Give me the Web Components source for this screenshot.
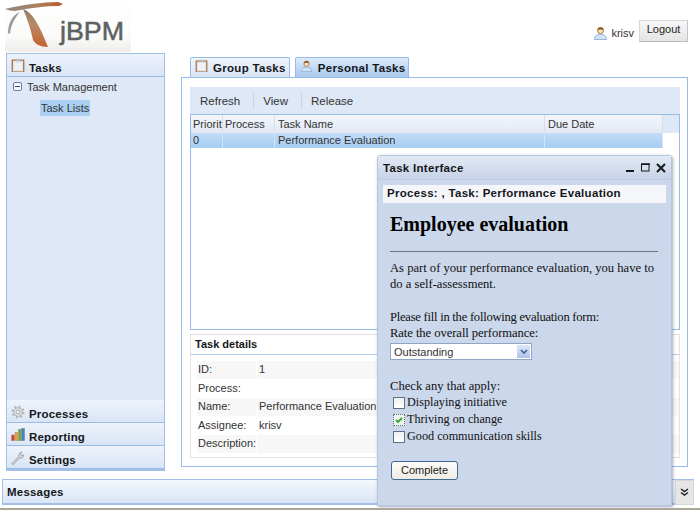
<!DOCTYPE html>
<html>
<head>
<meta charset="utf-8">
<title>jBPM</title>
<style>
html,body{margin:0;padding:0;background:#fff;overflow:hidden;}
body{font-family:"Liberation Sans",Arial,sans-serif;font-size:11px;color:#333;}
</style>
</head>
<body>
<jbpm-app></jbpm-app>
<script>
const ICONS = {
   clipboard: `<svg viewBox="0 0 16 17"><rect x="1.500" y="2.500" width="13" height="13.500" fill="#fff" stroke="#a9794f" stroke-width="1.600"/><rect x="3.200" y="4.500" width="9.600" height="10" fill="#eef1f5" stroke="#c9d0da" stroke-width=".6"/><rect x="5" y="1" width="6" height="3" fill="#b9bdc2"/></svg>`,
   user: `<svg viewBox="0 0 16 17"><path d="M1.500 15.500c0-4 2.800-5.500 6.500-5.500s6.500 1.500 6.500 5.500z" fill="#cfe2f6" stroke="#8fb2dc"/><circle cx="8" cy="6" r="3.200" fill="#f7e0c0" stroke="#a5763c"/><path d="M4.800 5.500a3.200 3.200 0 0 1 6.400 0c-1.500-1-4.900-1-6.400 0z" fill="#8c5a24"/></svg>`,
   gear: `<svg viewBox="0 0 16 16"><circle cx="8" cy="8" r="5" fill="#dcdee0" stroke="#a9acaf"/><circle cx="8" cy="8" r="6.300" fill="none" stroke="#b4b7ba" stroke-width="2.400" stroke-dasharray="2.200 2.750"/><circle cx="8" cy="8" r="2.200" fill="#f4f5f6" stroke="#a2a5a8"/></svg>`,
   chart: `<svg viewBox="0 0 16 15"><rect x=".5" y="8" width="3.500" height="6.500" fill="#d8452c" stroke="#9c8f86" stroke-width=".5"/><rect x="4.500" y="5" width="3.500" height="9.500" fill="#e8a03c" stroke="#9c8f86" stroke-width=".5"/><rect x="8.500" y="1.500" width="3.200" height="13" fill="#6fae3c" stroke="#7d8d80" stroke-width=".5"/><rect x="12.300" y=".5" width="3.200" height="14" fill="#4a7fc4" stroke="#6f7f98" stroke-width=".5"/></svg>`,
   wrench: `<svg viewBox="0 0 16 16"><path d="M.8 14.600 8.800 6.400c-.5-2.400.9-5 4-5.400l-2 2.500 1.200 1.700 2.700-.8c.2 3-2.800 4.700-5 3.800l-7.400 7.400z" fill="#d4d6d8" stroke="#8e9296" stroke-width=".8"/></svg>`
};

function shell(el, html){
   el.attachShadow({mode:'open'}).innerHTML = html;
}

customElements.define('j-icon', class extends HTMLElement {
   constructor(){super();
      shell(this, `<style>:host{display:inline-flex;flex:none;}svg{display:block;width:var(--icon,16px);height:auto;}</style>${ICONS[this.getAttribute('name')]}`);
   }
});

customElements.define('jbpm-logo', class extends HTMLElement {
   constructor(){super();
      shell(this, `<style>
:host{display:block;width:126px;height:52px;}
svg{display:block;}
text{font-family:"Liberation Sans",Arial,sans-serif;}
</style>
<svg width="126" height="52" viewBox="0 0 126 52">
   <defs>
      <linearGradient id="bg" x1="0" y1="0" x2="0" y2="1"><stop offset="0" stop-color="#fff"/><stop offset=".7" stop-color="#fafaf8"/><stop offset="1" stop-color="#efeeec"/></linearGradient>
      <linearGradient id="arc" x1="0" y1="0" x2="0" y2="1"><stop offset="0" stop-color="#8d7a66"/><stop offset=".4" stop-color="#b98a68"/><stop offset="1" stop-color="#c4622f"/></linearGradient>
      <linearGradient id="top" x1="0" y1="0" x2="1" y2="0"><stop offset="0" stop-color="#8f8a80"/><stop offset=".6" stop-color="#ad7f5c"/><stop offset="1" stop-color="#b5582a"/></linearGradient>
   </defs>
   <rect width="126" height="52" fill="url(#bg)"/>
   <path d="M0 9C16 5 38 2 53 2l5 2-4 2C40 6 24 8 10 11 6 11 3 10 0 9z" fill="url(#top)"/>
   <path d="M18 9C27 12 34 24 43 47 35 47 30 44 28 40 26 30 22 18 18 9z" fill="url(#arc)"/>
   <path d="M3 33C3 24 7 15 15 12 9 19 6 25 5 34z" fill="#9a9c9c"/>
   <text x="55" y="40" font-size="25" fill="#5c6263" stroke="#5c6263" stroke-width=".5" textLength="64" lengthAdjust="spacingAndGlyphs">jBPM</text>
</svg>`);
   }
});

customElements.define('jbpm-header', class extends HTMLElement {
   constructor(){super();
      shell(this, `<style>
:host{display:flex;justify-content:space-between;height:53px;padding:0 12px 0 5px;box-sizing:border-box;}
.user{display:flex;align-items:center;align-self:flex-start;margin-top:19px;height:23px;}
.name{margin:5px 5px 0 3px;color:#333;}
button{width:49px;height:22px;padding:0 0 3px;font:11px "Liberation Sans",Arial,sans-serif;color:#222;border:1px solid #d6d6d6;border-bottom-color:#bbb;border-right-color:#c4c4c4;background:linear-gradient(#f8f8f8,#e4e4e4);}
j-icon{margin-top:5px;--icon:15px;}
</style>
<jbpm-logo></jbpm-logo>
<div class="user"><j-icon name="user"></j-icon><span class="name"><slot></slot></span><button>Logout</button></div>`);
   }
});

customElements.define('nav-section', class extends HTMLElement {
   constructor(){super();
      const open = this.hasAttribute('open');
      shell(this, `<style>
:host{display:flex;flex-direction:column;box-sizing:border-box;}
:host([open]){flex:1;}
.head{display:flex;align-items:center;gap:4px;height:22px;padding:0 0 0 4px;font-weight:bold;font-size:11.500px;letter-spacing:.2px;color:#15171a;background:linear-gradient(#eef3fb,#d9e5f6);border-bottom:1px solid #99bbe8;box-sizing:content-box;--icon:14px;}
.head span{padding-top:5px;}
:host(:not([open])) j-icon{margin-top:2px;}
.body{flex:1;background:#dfe8f6;}
</style>
<div class="head"><j-icon name="${this.getAttribute('icon')}"></j-icon><span>${this.getAttribute('label')}</span></div>
${open ? '<div class="body"><slot></slot></div>' : ''}`);
   }
});

customElements.define('nav-tree', class extends HTMLElement {
   constructor(){super();
      shell(this, `<style>
:host{display:block;padding-top:2px;color:#333;}
.row{display:flex;align-items:center;height:15px;padding-left:6px;gap:5px;}
.box{width:7px;height:7px;border:1px solid #6b7fa6;border-radius:2px;position:relative;background:#f4f7fb;}
.box::after{content:"";position:absolute;left:1px;right:1px;top:3px;height:1px;background:#39476b;}
.leaf{display:block;width:max-content;margin:6px 0 0 33px;padding:1px 1px 0;height:16px;line-height:15px;box-sizing:border-box;background:#a9cff3;}
</style>
<div class="row"><span class="box"></span><span>Task Management</span></div>
<span class="leaf">Task Lists</span>`);
   }
});

customElements.define('jbpm-sidebar', class extends HTMLElement {
   constructor(){super();
      shell(this, `<style>
:host{display:flex;flex-direction:column;width:159px;height:418px;box-sizing:border-box;border:1px solid #a3bfe8;border-bottom-width:2px;background:#dfe8f6;}
</style>
<slot></slot>`);
   }
});

customElements.define('tab-strip', class extends HTMLElement {
   constructor(){super();
      shell(this, `<style>
:host{display:flex;gap:5px;height:20px;padding-left:9px;margin-top:4px;box-sizing:content-box;}
</style><slot></slot>`);
   }
});

customElements.define('tab-item', class extends HTMLElement {
   constructor(){super();
      shell(this, `<style>
:host{display:flex;align-items:center;gap:5px;height:20px;padding:0 3px 0 4px;box-sizing:border-box;border:1px solid #99bbe8;border-bottom:0;border-radius:2px 2px 0 0;font-weight:bold;font-size:11.500px;letter-spacing:.3px;color:#15171a;background:linear-gradient(#f0f4fb,#d8e4f5);--icon:13px;}
:host([active]){background:linear-gradient(#dcebfc,#a9c9ef);}
j-icon{margin-top:-4px;}
</style><j-icon name="${this.getAttribute('icon')}"></j-icon><slot></slot>`);
   }
});

customElements.define('task-toolbar', class extends HTMLElement {
   constructor(){super();
      shell(this, `<style>
:host{display:flex;align-items:center;height:27px;box-sizing:border-box;padding:1px 0 0 10px;background:#dfe8f6;color:#333;font-size:11.500px;}
span{padding-right:13px;}
span+span{border-left:1px solid #c5d3e6;padding-left:9px;height:16px;line-height:16px;}
</style><span>Refresh</span><span>View</span><span>Release</span>`);
   }
});

customElements.define('task-grid', class extends HTMLElement {
   constructor(){super();
      shell(this, `<style>
:host{display:block;height:216px;box-sizing:border-box;border:1px solid #99bbe8;background:#fff;color:#333;}
.row{display:grid;grid-template-columns:32px 52px 270px 118px 1fr;}
.head{height:18px;background:#eaeff8;}
.head div{padding:3px 0 0 3px;border-right:1px solid #d7deea;background:linear-gradient(#f3f6fb,#e2e9f5);white-space:nowrap;overflow:hidden;box-sizing:border-box;}
.head div:nth-child(1){padding-left:2px;}
.head div:nth-child(2){padding-left:2px;}
.head div:last-child{border:0;background:#dfe8f6;}
.sel{height:15px;background:none;}
.sel div{padding:1px 0 0 3px;background:linear-gradient(#c3dcf6,#a5cdf2);border-right:1px solid #d2e4f6;box-sizing:border-box;}
.sel div:nth-child(1){padding-left:2px;}
.sel div:last-child{background:none;border:0;}
</style>
<div class="row head"><div>Priority</div><div>Process</div><div>Task Name</div><div>Due Date</div><div></div></div>
<div class="row sel"><div>0</div><div></div><div>Performance Evaluation</div><div></div><div></div></div>`);
   }
});

customElements.define('task-details', class extends HTMLElement {
   constructor(){super();
      shell(this, `<style>
:host{display:block;height:124px;margin-top:4px;box-sizing:border-box;border:1px solid #e2e2e2;color:#333;background:#fff;}
.title{padding:3px 0 0 4px;font-weight:bold;color:#15171a;border-bottom:1px solid #b5cdee;box-sizing:content-box;height:16px;}
dl{display:grid;grid-template-columns:60px 1fr;margin:6px 0 0 6px;row-gap:1px;grid-auto-rows:17.500px;}
dt,dd{margin:0;padding:2px 0 0 1px;white-space:nowrap;overflow:hidden;}
dd{padding-left:2px;}
dt:nth-of-type(odd),dd:nth-of-type(odd){background:#f7f7f7;}
dt{margin-right:1px;}
</style>
<div class="title">Task details</div>
<dl>
<dt>ID:</dt><dd>1</dd>
<dt>Process:</dt><dd></dd>
<dt>Name:</dt><dd>Performance Evaluation</dd>
<dt>Assignee:</dt><dd>krisv</dd>
<dt>Description:</dt><dd></dd>
</dl>`);
   }
});

customElements.define('task-panel', class extends HTMLElement {
   constructor(){super();
      shell(this, `<style>
:host{display:block;width:507px;}
.panel{height:390px;box-sizing:border-box;border:1px solid #99bbe8;padding:9px 7px 0 8px;background:#fff;}
</style>
<tab-strip><tab-item icon="clipboard">Group Tasks</tab-item><tab-item icon="user" active>Personal Tasks</tab-item></tab-strip>
<div class="panel"><slot></slot></div>`);
   }
});

customElements.define('messages-bar', class extends HTMLElement {
   constructor(){super();
      shell(this, `<style>
:host{display:flex;align-items:center;justify-content:space-between;height:26px;margin:8px 6px 0 2px;box-sizing:border-box;border:1px solid #a3bfe8;border-bottom-width:2px;padding-left:4px;font-weight:bold;font-size:11.500px;letter-spacing:.2px;color:#15171a;background:linear-gradient(#f4f7fc,#d9e5f6);}
.btn{display:flex;align-items:center;justify-content:center;width:19px;height:25px;margin:-1px -1px -2px 0;background:#e6e6e6;border:1px solid #d8d8d8;box-sizing:border-box;}
</style>
<span>Messages</span>
<span class="btn"><svg width="9" height="8" viewBox="0 0 9 8"><path d="M1 1l3.500 2.500L8 1M1 4.500 4.500 7 8 4.500" fill="none" stroke="#222" stroke-width="1.500"/></svg></span>`);
   }
});

customElements.define('task-window', class extends HTMLElement {
   constructor(){super();
      shell(this, `<style>
:host{position:absolute;left:377px;top:155px;width:295px;height:351px;box-sizing:border-box;border:1px solid #b6c6de;border-radius:3px 3px 0 0;background:#cbd7ea;box-shadow:1px 1px 3px rgba(70,90,130,.5);font-family:"Liberation Serif","Times New Roman",serif;font-size:12.600px;color:#111;}
.bar{display:flex;align-items:center;justify-content:space-between;height:24px;padding:0 5px;box-sizing:border-box;background:linear-gradient(#e4eaf5,#c6d2e7);border-bottom:1px solid #bccbe2;font:bold 11.500px "Liberation Sans",Arial,sans-serif;letter-spacing:.3px;color:#15171a;}
.ctl{display:flex;align-items:center;gap:6px;}
.crumb{margin:5px 5px 0;height:18px;padding:2px 0 0 4px;box-sizing:border-box;background:#f4f6fa;font:bold 11.500px "Liberation Sans",Arial,sans-serif;letter-spacing:.3px;color:#15171a;}
form{display:block;padding:0 12px;margin:0;}
h1{font-size:20px;line-height:22px;margin:10px 0 16px;font-weight:bold;color:#000;}
hr{height:1px;border:0;background:#6f7680;margin:0 1px 8px 0;}
p{margin:0;line-height:16px;}
.tight{letter-spacing:-.25px;}
.rate{letter-spacing:-.06px;}
.sel{display:flex;align-items:center;justify-content:space-between;width:142px;height:17px;margin-top:2px;box-sizing:border-box;border:1px solid #8ea5c6;background:#fff;font:11px "Liberation Sans",Arial,sans-serif;color:#333;padding:0 1px 0 3px;}
.arrow{display:flex;align-items:center;justify-content:center;width:13px;height:13px;background:linear-gradient(#dce7fb,#aec4ee);}
.checks{padding-left:3px;font-size:12.200px;}
label{display:flex;align-items:center;gap:2px;height:17px;}
.cb{width:10px;height:10px;border:1px solid #5d7188;background:linear-gradient(#eef0f2,#fff);display:block;flex:none;box-sizing:content-box;}
.cb.on{border:1px dotted #5d7188;background:#eef3ea;}
.cb svg{display:block;}
button{display:block;width:67px;height:19px;margin:16px 0 0 1px;padding:0 0 1px;border:1px solid #3f6a94;border-radius:3px;background:linear-gradient(#fcfcfa,#eeece4);font:11px "Liberation Sans",Arial,sans-serif;color:#222;}
</style>
<div class="bar"><span>Task Interface</span><span class="ctl">
<svg width="9" height="9" viewBox="0 0 9 9"><rect x="0" y="7" width="8" height="2" fill="#15171a"/></svg>
<svg width="9" height="9" viewBox="0 0 9 9"><rect x=".5" y="1" width="7.500" height="7" fill="none" stroke="#15171a"/><rect x="0" y=".5" width="9" height="1.500" fill="#15171a"/></svg>
<svg width="10" height="10" viewBox="0 0 10 10"><path d="M1 1l8 8M9 1 1 9" stroke="#15171a" stroke-width="2"/></svg>
</span></div>
<div class="crumb">Process: , Task: Performance Evaluation</div>
<form>
<h1>Employee evaluation</h1>
<hr>
<p>As part of your performance evaluation, you have to<br>do a self-assessment.</p>
<p style="margin-top:17px"><span class="tight">Please fill in the following evaluation form:</span><br><span class="rate">Rate the overall performance:</span></p>
<div class="sel"><span>Outstanding</span><span class="arrow"><svg width="8" height="6" viewBox="0 0 8 6"><path d="M1 1l3 3 3-3" fill="none" stroke="#4a5f8c" stroke-width="1.600"/></svg></span></div>
<p style="margin-top:18px">Check any that apply:</p>
<div class="checks">
<label><span class="cb"></span>Displaying initiative</label>
<label><span class="cb on"><svg width="10" height="10" viewBox="0 0 10 10"><path d="M2 5l2 2 4-4" fill="none" stroke="#2fa53a" stroke-width="1.800"/></svg></span>Thriving on change</label>
<label><span class="cb"></span>Good communication skills</label>
</div>
<button type="button">Complete</button>
</form>`);
   }
});

customElements.define('jbpm-app', class extends HTMLElement {
   constructor(){super();
      shell(this, `<style>
:host{display:block;position:relative;width:700px;height:510px;overflow:hidden;box-sizing:border-box;border-bottom:2px solid #aca899;}
.mid{display:flex;gap:16px;padding-left:6px;}
</style>
<jbpm-header>krisv</jbpm-header>
<div class="mid">
   <jbpm-sidebar>
      <nav-section open icon="clipboard" label="Tasks"><nav-tree></nav-tree></nav-section>
      <nav-section icon="gear" label="Processes"></nav-section>
      <nav-section icon="chart" label="Reporting"></nav-section>
      <nav-section icon="wrench" label="Settings"></nav-section>
   </jbpm-sidebar>
   <task-panel>
      <task-toolbar></task-toolbar>
      <task-grid></task-grid>
      <task-details></task-details>
   </task-panel>
</div>
<messages-bar></messages-bar>
<task-window></task-window>`);
   }
});
</script>
</body>
</html>
